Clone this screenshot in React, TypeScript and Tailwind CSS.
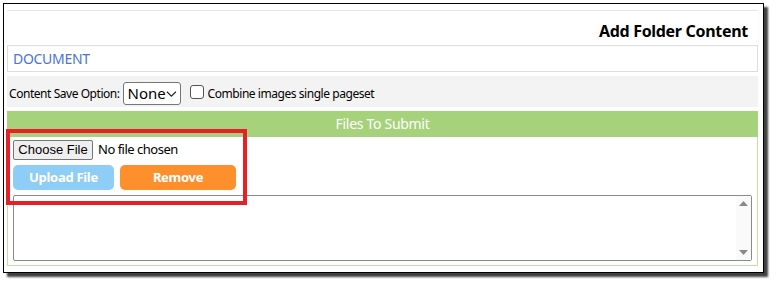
import React from "react";

export default function App() {
  const font = { fontFamily: '"Noto Sans", "Open Sans", sans-serif' };
  return (
    <div className="relative w-[776px] h-[283px] bg-white overflow-hidden" style={font}>
      <div className="ml-[3px] mt-[3px] w-[761px] h-[270px] border border-black bg-white shadow-[4px_4px_2px_rgba(0,0,0,0.75)] flex flex-col pl-[3px] pr-[5px] pt-[6px]">
        <div className="border-t border-[#e6e6e6] shadow-[0_1px_2px_rgba(0,0,0,0.06)] h-[35px] flex items-center justify-end pr-[10px] pt-[5px]">
          <span className="text-[16px] font-bold text-black leading-none tracking-[-0.3px]">Add Folder Content</span>
        </div>
        <div className="h-[27px] border border-[#dedede] flex items-center pl-[5px]">
          <span className="text-[14px] text-[#4a72e0] leading-none tracking-[-0.3px]">DOCUMENT</span>
        </div>
        <div className="mt-[4px] h-[31px] bg-[#f3f3f3] flex items-center pl-[2px] pt-[4px] gap-[2px] tracking-[-0.45px]">
          <span className="text-[12px] text-black">Content Save Option:</span>
          <div className="ml-[1px] h-[23px] w-[58px] border border-[#767676] rounded-[3px] bg-white flex items-center pl-[4px] pr-[3px] justify-between tracking-normal">
            <span className="text-[15px] text-black leading-none">None</span>
            <svg width="12" height="8" viewBox="0 0 12 8">
              <path d="M1 1.5l5 5 5-5" stroke="#222" strokeWidth="1.3" fill="none" />
            </svg>
          </div>
          <div className="ml-[7px] w-[14px] h-[14px] border border-[#555] rounded-[3px] bg-white -mt-[4px]" />
          <span className="ml-[2px] text-[12px] text-black">Combine images single pageset</span>
        </div>
        <div className="mt-[4px] h-[26px] bg-[#a6d27c] flex items-center justify-center">
          <span className="text-[14px] text-white leading-none tracking-[-0.3px]">Files To Submit</span>
        </div>
        <div className="h-[129px] border-x border-b border-[#bfe0a6] flex flex-col pl-[5px] pr-[5px] pt-[3px]">
          <div className="flex items-center h-[20px] gap-[5px]">
            <div
              className="w-[80px] h-[20px] border border-[#767676] rounded-[2px] bg-[#efefef] flex items-center justify-center text-[13px] text-black"
              style={{ fontFamily: '"Liberation Sans", Arial, sans-serif' }}
            >
              Choose File
            </div>
            <span className="text-[13px] text-black tracking-[-0.5px]">No file chosen</span>
          </div>
          <div className="mt-[5px] flex gap-[6px] h-[25px]">
            <div className="w-[101px] h-[25px] rounded-[5px] bg-[#8dcdf6] flex items-center justify-center">
              <span className="text-[13px] font-bold text-white tracking-[-0.3px]">Upload File</span>
            </div>
            <div className="w-[116px] h-[25px] rounded-[5px] bg-[#fd8f2d] flex items-center justify-center">
              <span className="text-[13px] font-bold text-white tracking-[-0.3px]">Remove</span>
            </div>
          </div>
          <div className="mt-[5px] h-[66px] border border-[#8a8a8a] rounded-[2px] bg-white flex justify-end">
            <div className="w-[15px] h-full bg-[#fafafa] flex flex-col items-center justify-between py-[5px]">
              <svg width="9" height="5" viewBox="0 0 9 5">
                <path d="M0 5L4.5 0L9 5z" fill="#8a8a8a" />
              </svg>
              <svg width="9" height="5" viewBox="0 0 9 5">
                <path d="M0 0L4.5 5L9 0z" fill="#8a8a8a" />
              </svg>
            </div>
          </div>
        </div>
      </div>
      <div className="absolute left-[6px] top-[129px] w-[241px] h-[76px] border-[4px] border-[#e81f27]" />
    </div>
  );
}
